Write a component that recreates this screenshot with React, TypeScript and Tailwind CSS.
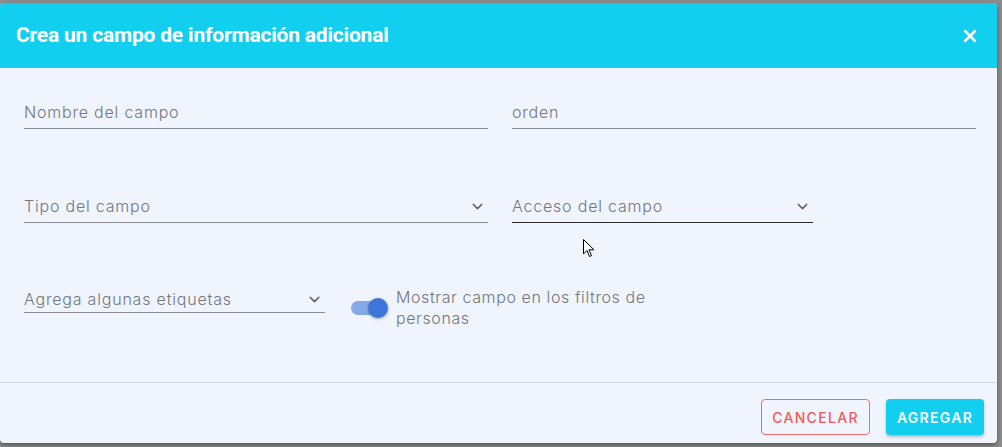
import { ChevronDown, X } from "lucide-react";

const labelFont = { fontFamily: '"Inter", "Open Sans", sans-serif' };

function Field({ label, width, dark, select, pb = "pb-[6px]" }: { label: string; width: string; dark?: boolean; select?: boolean; pb?: string }) {
  return (
    <div className={`${width} shrink-0 flex items-center justify-between border-b ${pb} ${dark ? "border-[#2b2b2b]" : "border-[#8a8d93]"}`}>
      <span className="text-[16px] font-light text-[#74777d] leading-[20px] tracking-[0.8px]">{label}</span>
      {select && <ChevronDown className="w-[17px] h-[17px] text-[#5f6268] mr-[2px]" strokeWidth={2} />}
    </div>
  );
}

export default function App() {
  return (
    <div className="w-[1002px] h-[447px] bg-[#8c8c8c] pt-[3px] overflow-hidden" style={labelFont}>
      <div className="relative w-[997px] h-[440px] bg-[#eff4fd] rounded-[4px] overflow-hidden flex flex-col shadow-[0_2px_4px_rgba(0,0,0,0.4)]">
        <div className="h-[65px] bg-[#12cff0] flex items-center justify-between pl-[16px] pr-[17px] shrink-0">
          <h2 className="text-white text-[21px] font-bold tracking-[-0.2px]" style={{ fontFamily: '"Roboto", sans-serif' }}>
            Crea un campo de información adicional
          </h2>
          <X className="w-[20px] h-[20px] text-white" strokeWidth={3} />
        </div>

        <div className="flex-1 pl-[24px] pr-[21px] pt-[34px] flex flex-col">
          <div className="flex gap-[24px]">
            <Field label="Nombre del campo" width="w-[464px]" />
            <Field label="orden" width="w-[464px]" />
          </div>
          <div className="flex gap-[24px] mt-[67px]">
            <Field label="Tipo del campo" width="w-[464px]" select />
            <Field label="Acceso del campo" width="w-[301px]" dark select />
          </div>
          <div className="flex items-start mt-[66px]">
            <Field label="Agrega algunas etiquetas" width="w-[301px]" select pb="pb-[3px]" />
            <div className="relative ml-[26px] mt-[9px] w-[37px] h-[20px] shrink-0">
              <div className="absolute left-0 top-[3px] w-[34px] h-[14px] rounded-full bg-[#86a9e8]" />
              <div className="absolute left-[17px] top-0 w-[20px] h-[20px] rounded-full bg-[#3d77d9] shadow-[0_1px_3px_rgba(0,0,0,0.35)]" />
            </div>
            <p className="ml-[8px] w-[270px] text-[16px] font-light text-[#74777d] leading-[21px] tracking-[0.6px] -mt-[2px]">
              Mostrar campo en los filtros de personas
            </p>
          </div>
        </div>

        <div className="h-[61px] border-t border-[#d3d6dd] flex items-start justify-end gap-[16px] pr-[13px] pt-[16px] shrink-0">
          <button className="h-[36px] w-[109px] border border-[#f26b6b] rounded-[4px] text-[#f25a5a] text-[14px] font-medium tracking-[1.3px]">
            CANCELAR
          </button>
          <button className="h-[36px] w-[98px] bg-[#12cff0] rounded-[4px] text-white text-[14px] font-semibold tracking-[1.3px] shadow-[0_2px_3px_rgba(0,0,0,0.25)]">
            AGREGAR
          </button>
        </div>

        <svg className="absolute left-[583px] top-[236px]" width="12" height="19" viewBox="0 0 12 19">
          <path d="M0.5 0.5 L0.5 15 L4 11.5 L6.5 17.5 L8.5 16.6 L6 10.8 L11 10.8 Z" fill="#fff" stroke="#000" strokeWidth="1" strokeLinejoin="miter" />
        </svg>
      </div>
    </div>
  );
}
